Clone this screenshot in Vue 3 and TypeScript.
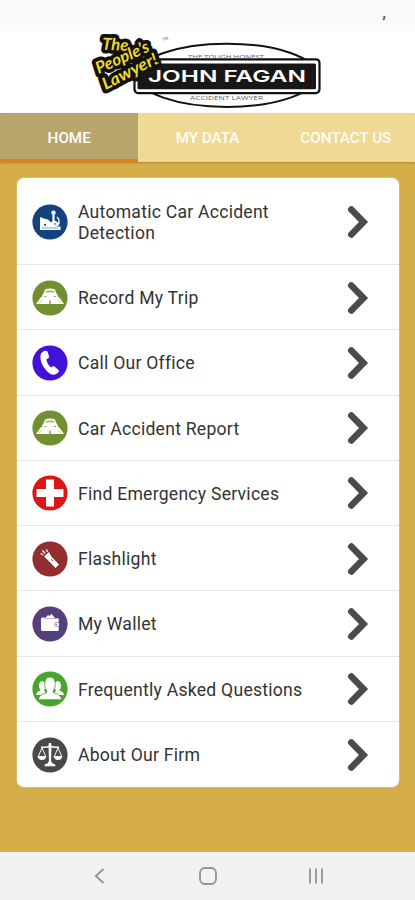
<script setup lang="ts">
import { ref } from 'vue'

interface MenuItem {
  label: string
  icon: string
  color: string
}

const tabs: string[] = ['HOME', 'MY DATA', 'CONTACT US']
const active = ref(0)

const items: MenuItem[] = [
  { label: 'Automatic Car Accident Detection', icon: 'crash', color: '#14427f' },
  { label: 'Record My Trip', icon: 'car', color: '#728f31' },
  { label: 'Call Our Office', icon: 'phone', color: '#4212d6' },
  { label: 'Car Accident Report', icon: 'car', color: '#728f31' },
  { label: 'Find Emergency Services', icon: 'cross', color: '#dc1515' },
  { label: 'Flashlight', icon: 'torch', color: '#922e30' },
  { label: 'My Wallet', icon: 'wallet', color: '#563f7d' },
  { label: 'Frequently Asked Questions', icon: 'people', color: '#46a52f' },
  { label: 'About Our Firm', icon: 'scales', color: '#49494b' },
]
</script>

<template>
  <div class="screen">
    <div class="status"><span>,</span></div>

    <header class="header">
      <svg class="logo" viewBox="88 31 240 82" width="240" height="82">
        <ellipse cx="227" cy="75.3" rx="90" ry="31.6" fill="#fff" stroke="#111" stroke-width="2" />
        <rect x="134.5" y="59.3" width="185" height="33.8" rx="3.5" fill="#fff" stroke="#111" stroke-width="2.2" />
        <rect x="137.5" y="63.4" width="178.5" height="25.8" rx="1.5" fill="#171717" />
        <text class="name" x="148" y="82.3" textLength="158" lengthAdjust="spacingAndGlyphs">JOHN FAGAN</text>
        <text class="small" x="188" y="58.6" textLength="76" lengthAdjust="spacingAndGlyphs">THE TOUGH HONEST</text>
        <text class="small" x="190" y="99.6" textLength="73" lengthAdjust="spacingAndGlyphs">ACCIDENT LAWYER</text>
        <g class="script back">
          <text transform="translate(102 49.5) rotate(3)" textLength="26" lengthAdjust="spacingAndGlyphs">The</text>
          <text transform="translate(98.5 74) rotate(-24)" textLength="57" lengthAdjust="spacingAndGlyphs">People’s</text>
          <text transform="translate(105.5 90) rotate(-27)" textLength="60" lengthAdjust="spacingAndGlyphs">Lawyer!</text>
        </g>
        <g class="script">
          <text transform="translate(102 49.5) rotate(3)" textLength="26" lengthAdjust="spacingAndGlyphs">The</text>
          <text transform="translate(98.5 74) rotate(-24)" textLength="57" lengthAdjust="spacingAndGlyphs">People’s</text>
          <text transform="translate(105.5 90) rotate(-27)" textLength="60" lengthAdjust="spacingAndGlyphs">Lawyer!</text>
        </g>
        <text class="tm" x="163" y="41" transform="rotate(-18 163 41)">TM</text>
      </svg>
    </header>

    <nav class="tabs">
      <button
        v-for="(tab, i) in tabs"
        :key="tab"
        class="tab"
        :class="{ active: i === active }"
        @click="active = i"
      >{{ tab }}</button>
    </nav>

    <main class="content">
      <ul class="card">
        <li v-for="item in items" :key="item.label" class="row">
          <svg class="icon" viewBox="0 0 36 36" width="36" height="36">
            <circle cx="18" cy="18" r="17.6" :fill="item.color" />
            <g v-if="item.icon === 'crash'" fill="#fff">
              <path d="M8 13l4 1.500 4 1 3 3 3-1.500 1 5.500-4 1.500H8z" />
              <circle cx="21.500" cy="8.800" r="2.200" />
              <path d="M21.500 11v6.500l-3 3M21 17l5 2.500-3 3" fill="none" stroke="#fff" stroke-width="2.200" />
              <path d="M25 13q4 4 .500 9" fill="none" stroke="#fff" stroke-width="1.200" />
              <rect x="8" y="22.500" width="20.500" height="3.500" />
              <path d="M10 24h16" :stroke="item.color" stroke-width=".5" />
              <circle cx="13" cy="20.800" r="1.100" :fill="item.color" />
            </g>
            <g v-else-if="item.icon === 'car'" fill="#fff">
              <path d="M9 17h18l5 7H4z" />
              <path d="M13 9.500q5-2 10 0l1.500 4 1.500 2v4.500H10v-4.500l1.500-2z" />
              <path d="M14 10.500h8l.8 2H13.200z" :fill="item.color" opacity=".6" />
              <path d="M12 16.500h2.500M21.500 16.500h2.500" :stroke="item.color" stroke-width=".7" />
              <path d="M10 20l-3 3M26 20l3 3" :stroke="item.color" stroke-width=".4" />
              <path d="M18 20.500v3.500" :stroke="item.color" stroke-width="1.300" />
            </g>
            <path
              v-else-if="item.icon === 'phone'"
              fill="#fff"
              d="M9.500 8q3-3.400 6-1.500l1.700 5.300q-.2 1.500-3 2.600 1 5 4.700 8.200 2.500-2 4-.8l3.800 3.500q.7 2.200-3 3.900-4.700 1.700-9-3.200Q7.500 18 8.500 10z"
            />
            <path v-else-if="item.icon === 'cross'" fill="#fff" d="M14 4.500h8v9.500h9.500v8H22v9.500h-8V22H4.500v-8H14z" />
            <g v-else-if="item.icon === 'torch'" fill="#fff">
              <path d="M12 15.500l5-4.500 2.500 4.800 7.500 7.700-3.500 3.500-7.500-7.800z" />
              <path d="M8.500 12.500l3 1.500M10.500 9.500l2.500 2.700M14.500 8.500l.8 2.500" stroke="#fff" stroke-width="1.300" />
              <path d="M19 18l2 2" :stroke="item.color" stroke-width=".9" />
            </g>
            <g v-else-if="item.icon === 'wallet'" fill="#fff">
              <path d="M13.500 12l2.500-3 1.500 1 2-2.200 3.500 4.200z" />
              <path d="M10 11.500l16 .7q.7 0 .7 1V24q0 1-1 1H10.500q-1.500 0-1.500-1.500V12.500z" />
              <path d="M12 12.600h13" :stroke="item.color" stroke-width=".4" />
              <path d="M27 16.500h-3.500q-2 1.800 0 3.800H27" fill="#fff" :stroke="item.color" stroke-width=".5" />
              <circle cx="24.300" cy="18.400" r=".7" :fill="item.color" />
            </g>
            <g v-else-if="item.icon === 'people'" fill="#fff">
              <path d="M4 24q0-3 4.500-4.500-.2-1-1.200-2.500-1.300-6.500 3-7 4.300.5 3 7-1 1.500-1.200 2.500l3 4.500z" />
              <path d="M32 24q0-3-4.500-4.500.2-1 1.200-2.500 1.300-6.500-3-7-4.300.5-3 7 1 1.500 1.200 2.500l-3 4.500z" />
              <path
                :stroke="item.color"
                stroke-width=".8"
                d="M6.500 28.700q0-5 8.200-7v-2Q13.200 18 12.700 14.500 12.200 6.300 18 6.100q5.800.2 5.300 8.400-.5 3.500-2 5.200v2q8.200 2 8.200 7z"
              />
            </g>
            <g v-else fill="#fff">
              <path d="M17 6h2l.5 2.500L19 26h-2l-.5-17.500z" />
              <path d="M9 10q4 1 9-.7 5 1.700 9 .7" fill="none" stroke="#fff" stroke-width="1.500" />
              <path d="M10 11l-3.500 8M10 11l3.500 8M26 11l-3.500 8M26 11l3.500 8" stroke="#fff" stroke-width="1" />
              <path d="M5.500 19h9q-.7 4-4.500 4t-4.500-4zM21.500 19h9q-.7 4-4.500 4t-4.500-4zM12.500 29.300q0-2.800 3-2.800l1-2h3l1 2q3 0 3 2.800z" />
            </g>
          </svg>
          <span class="label">{{ item.label }}</span>
          <svg class="chevron" viewBox="0 0 22 34" width="22" height="34">
            <path d="M4.300 4.500L16.500 17 4.300 29.500" fill="none" stroke="#4b4b4b" stroke-width="6.600" stroke-linecap="round" />
          </svg>
        </li>
      </ul>
    </main>

    <footer class="navbar">
      <svg viewBox="0 0 20 20" width="20" height="20"><path d="M13.500 3l-7.700 7 7.700 7" /></svg>
      <svg viewBox="0 0 20 20" width="20" height="20"><rect x="2" y="2" width="16" height="16" rx="5" /></svg>
      <svg viewBox="0 0 20 20" width="20" height="20"><path d="M4 2.500v15M10 2.500v15M16 2.500v15" /></svg>
    </footer>
  </div>
</template>

<style>
body {
  background: #d5ae49;
}
</style>

<style scoped>
.screen {
  height: 900px;
  display: flex;
  flex-direction: column;
  overflow: hidden;
  background: #d5ae49;
  font-family: Roboto, "Liberation Sans", sans-serif;
}
.status {
  height: 31px;
  flex: none;
  display: flex;
  justify-content: flex-end;
  box-sizing: border-box;
  padding: 5px 29px 0 0;
  background: #fafafa;
  color: #555;
  font-size: 17px;
  font-weight: 500;
  line-height: 14px;
}
.header {
  height: 82px;
  flex: none;
  display: flex;
  justify-content: center;
  background: #fff;
}
.logo {
  display: block;
}
.name {
  font: 600 16.500px Inter, sans-serif;
  fill: #fff;
}
.small {
  font: 400 5.600px "Open Sans", sans-serif;
  fill: #666;
}
.tm {
  font: 400 4px Roboto, sans-serif;
  fill: #666;
}
.script {
  font: italic 700 16.500px Lato, sans-serif;
  fill: #efdb2d;
}
.back {
  fill: #111;
  stroke: #111;
  stroke-width: 7.500px;
  stroke-linejoin: round;
}
.tabs {
  height: 49px;
  flex: none;
  display: grid;
  grid-template-columns: repeat(3, 1fr);
  background: #f0d995;
  box-shadow: 0 1px 2px rgba(120, 85, 10, 0.45);
}
.tab {
  border: 0;
  border-bottom: 3px solid transparent;
  padding: 4px 0 0;
  background: none;
  color: #fffdf4;
  font: 500 15.200px Roboto, sans-serif;
  white-space: nowrap;
}
.tab.active {
  background: #b8a66d;
  border-bottom-color: #e87d18;
  color: #fff;
}
.content {
  flex: 1;
  padding: 16px 16px 0 17px;
}
.card {
  margin: 0;
  padding: 0;
  height: 609px;
  list-style: none;
  display: grid;
  grid-template-rows: 87px repeat(8, 1fr);
  overflow: hidden;
  border-radius: 7px;
  background: #fff;
  box-shadow: 0 0 1px 1px rgba(225, 205, 150, 0.5);
}
.row {
  display: flex;
  align-items: center;
  box-sizing: border-box;
  padding: 1px 30px 0 15px;
  border-bottom: 1.500px solid #e5e7e7;
}
.row:last-child {
  border-bottom: 0;
}
.icon {
  flex: none;
}
.label {
  width: 232px;
  margin-left: 10px;
  padding-top: 2px;
  color: #333;
  font-size: 17.600px;
  line-height: 21px;
  letter-spacing: 0.240px;
}
.chevron {
  margin-left: auto;
}
.navbar {
  height: 48px;
  flex: none;
  display: flex;
  align-items: center;
  justify-content: space-between;
  box-sizing: border-box;
  padding: 0 89px 0 90px;
  background: #f1f1f1;
}
.navbar svg {
  fill: none;
  stroke: #929292;
  stroke-width: 1.800px;
}
</style>
